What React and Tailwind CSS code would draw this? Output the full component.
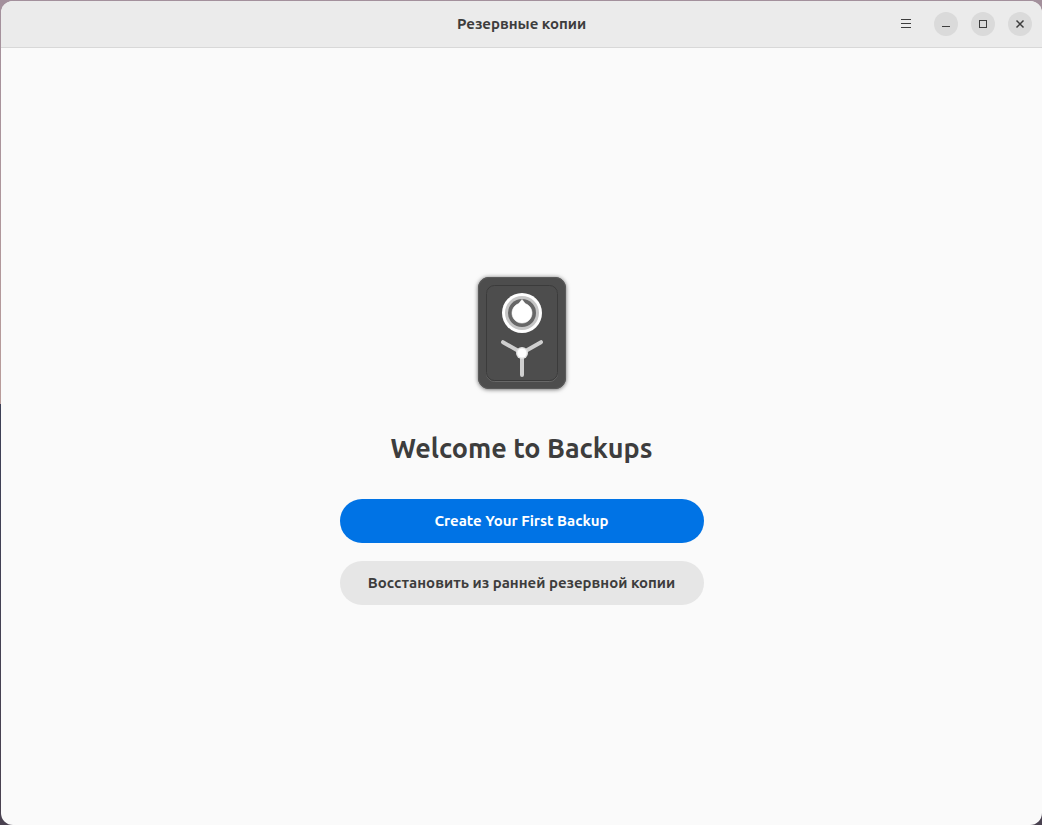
function SafeIcon() {
  return (
    <svg className="size-32" viewBox="0 0 128 128" aria-hidden="true">
      <defs>
        <filter id="shadow" x="-20%" y="-20%" width="140%" height="140%">
          <feDropShadow dx="0" dy="0.5" stdDeviation="2" floodColor="#000" floodOpacity="0.6" />
        </filter>
      </defs>
      <rect x="20" y="8" width="88" height="112" rx="11" fill="#4d4d4d" filter="url(#shadow)" />
      <rect x="20.5" y="8.5" width="87" height="111" rx="10.5" fill="none" stroke="#5a5a5a" />
      <rect x="28.5" y="17.5" width="71" height="95" rx="8" fill="none" stroke="#686868" />
      <rect x="28.5" y="16.5" width="71" height="95" rx="8" fill="#4d4d4d" stroke="#3b3b3b" />
      <circle cx="64" cy="44" r="20" fill="#fff" />
      <circle cx="64" cy="44" r="17" fill="#c6c6c6" />
      <circle cx="64" cy="44" r="14" fill="#676767" />
      <path
        d="M64 30.5 L67.2 34.6 A10 10 0 1 1 60.8 34.6 Z"
        fill="#fff"
        stroke="#fff"
        strokeWidth="0.6"
        strokeLinejoin="round"
      />
      <path
        d="M64 84 L45 73.2 M64 84 L83 73.2 M64 84 V106"
        stroke="#cfcfcf"
        strokeWidth="4"
        strokeLinecap="round"
      />
      <circle cx="64" cy="84" r="6" fill="#e2e2e2" />
      <circle cx="64" cy="84" r="4.6" fill="#fff" />
    </svg>
  );
}

function WindowButton({ label, children }) {
  return (
    <button
      type="button"
      aria-label={label}
      className="flex size-6 items-center justify-center rounded-full bg-[#dadada] text-[#3d3d3d] hover:bg-[#d0d0d0]"
    >
      <svg className="size-4" viewBox="0 0 16 16" fill="none" stroke="currentColor" aria-hidden="true">
        {children}
      </svg>
    </button>
  );
}

function HeaderBar() {
  return (
    <header className="grid h-[47px] grid-cols-[1fr_auto_1fr] items-center border-b border-[#d8d8d8] bg-[#ebebeb] px-[10px]">
      <h1 className="col-start-2 text-[15px] leading-5 font-bold">Резервные копии</h1>
      <div className="flex items-center justify-end gap-[13px]">
        <button
          type="button"
          aria-label="Главное меню"
          className="mr-[3px] flex size-6 items-center justify-center rounded text-[#3d3d3d]"
        >
          <svg className="size-4" viewBox="0 0 16 16" stroke="currentColor" aria-hidden="true">
            <path d="M3 3.5H13M3 7.5H13M3 11.5H13" />
          </svg>
        </button>
        <WindowButton label="Свернуть">
          <path d="M4 10.5H12" />
        </WindowButton>
        <WindowButton label="Развернуть">
          <rect x="4.5" y="4.5" width="7" height="7" />
        </WindowButton>
        <WindowButton label="Закрыть">
          <path d="M4.5 4.5L11.5 11.5M11.5 4.5L4.5 11.5" strokeWidth="1.5" />
        </WindowButton>
      </div>
    </header>
  );
}

export default function App() {
  return (
    <div className="flex min-h-screen bg-[linear-gradient(to_bottom,#a3909c,#b99c9a_49%,#3d4056_49%,#4a4250)] pt-px pl-px font-['Ubuntu','Noto_Sans',sans-serif] text-[#3d3d3d]">
      <div className="flex flex-1 flex-col overflow-hidden rounded-xl bg-[#fafafa]">
        <HeaderBar />
        <main className="flex flex-1 flex-col items-center justify-center px-4">
          <SafeIcon />
          <h2 className="mt-[31px] text-center text-[27px] leading-10 font-bold">Welcome to Backups</h2>
          <div className="mt-[31px] flex w-full max-w-[364px] flex-col gap-[18px] text-[15px] leading-5 font-bold">
            <button type="button" className="h-11 rounded-full bg-[#0073e5] px-8 text-white hover:bg-[#1a81e8]">
              Create Your First Backup
            </button>
            <button type="button" className="h-11 rounded-full bg-[#e6e6e6] whitespace-nowrap hover:bg-[#dedede]">
              Восстановить из ранней резервной копии
            </button>
          </div>
        </main>
      </div>
    </div>
  );
}
